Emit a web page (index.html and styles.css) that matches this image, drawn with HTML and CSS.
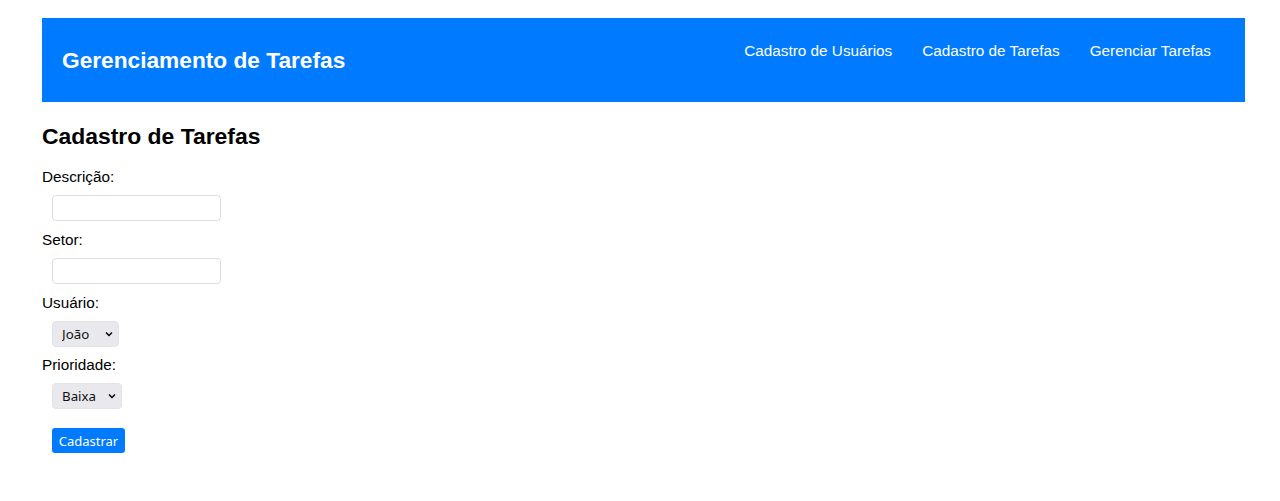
FILE: index.html
```html
<!DOCTYPE html>
<html lang="pt-BR">
<head>
<meta charset="utf-8">
<title>Gerenciamento de Tarefas</title>
<link rel="stylesheet" href="styles.css">
</head>
<body>
<div class="page">
  <header class="topbar">
    <h1 class="brand">Gerenciamento de Tarefas</h1>
    <nav class="nav">
      <a href="#">Cadastro de Usuários</a>
      <a href="#">Cadastro de Tarefas</a>
      <a href="#">Gerenciar Tarefas</a>
    </nav>
  </header>
  <main class="content">
    <h2 class="title">Cadastro de Tarefas</h2>
    <form class="form">
      <label class="label" for="desc">Descrição:</label>
      <input class="input" id="desc" type="text">
      <label class="label" for="setor">Setor:</label>
      <input class="input" id="setor" type="text">
      <label class="label" for="usuario">Usuário:</label>
      <select class="select sel-user" id="usuario"><option>João</option></select>
      <label class="label" for="prio">Prioridade:</label>
      <select class="select sel-prio" id="prio"><option>Baixa</option></select>
      <button class="btn" type="button">Cadastrar</button>
    </form>
  </main>
</div>
</body>
</html>
```
FILE: styles.css
```css
* { box-sizing: border-box; }
html, body { margin: 0; padding: 0; background: #fff; }
body { font-family: "Liberation Sans", Arial, Helvetica, sans-serif; color: #000; }
.page { padding: 18px 35px 0 42px; }
.topbar {
  background: #007bff;
  height: 84px;
  display: flex;
  justify-content: space-between;
  align-items: flex-start;
  padding: 0 34px 0 20px;
}
.brand {
  margin: 0;
  margin-top: 29px;
  font-size: 22.7px;
  line-height: 26px;
  font-weight: bold;
  color: #fff;
}
.nav { display: flex; gap: 30px; margin-top: 24px; }
.nav a { color: #fff; text-decoration: none; font-size: 15.3px; line-height: 18px; }
.content { padding: 0; }
.title { margin: 21px 0 0; font-size: 22.9px; line-height: 26px; font-weight: bold; }
.form { display: flex; flex-direction: column; align-items: flex-start; margin-top: 19px; }
.label { font-size: 15.3px; line-height: 18px; display: block; }
.input {
  margin: 9px 0 10px 10px;
  width: 169px;
  height: 26px;
  border: 1px solid #dedede;
  border-radius: 4px;
  background: #fff;
  font: 13px "Liberation Sans", Arial, sans-serif;
}
.select {
  appearance: none;
  -webkit-appearance: none;
  margin: 9px 0 9px 10px;
  height: 26px;
  border: 1px solid #e4e4e8;
  border-radius: 4px;
  background-color: #e9e9ed;
  background-image: url("data:image/svg+xml,%3Csvg xmlns='http://www.w3.org/2000/svg' width='8' height='6' viewBox='0 0 8 6'%3E%3Cpath d='M1 1.5 4 4.5 7 1.5' fill='none' stroke='%23000' stroke-width='1.4'/%3E%3C/svg%3E");
  background-repeat: no-repeat;
  background-position: right 5px center;
  font: 13.3px "Noto Sans", "Open Sans", sans-serif;
  color: #111;
  padding: 0 20px 0 9px;
}
.sel-user { width: 67px; }
.sel-prio { width: 70px; margin-bottom: 0; }
.btn {
  margin: 19px 0 0 10px;
  width: 73px;
  height: 25px;
  border: none;
  border-radius: 3px;
  background: #007bff;
  color: #fff;
  font: 13px "Noto Sans", "Open Sans", sans-serif;
  padding: 0;
}
```
